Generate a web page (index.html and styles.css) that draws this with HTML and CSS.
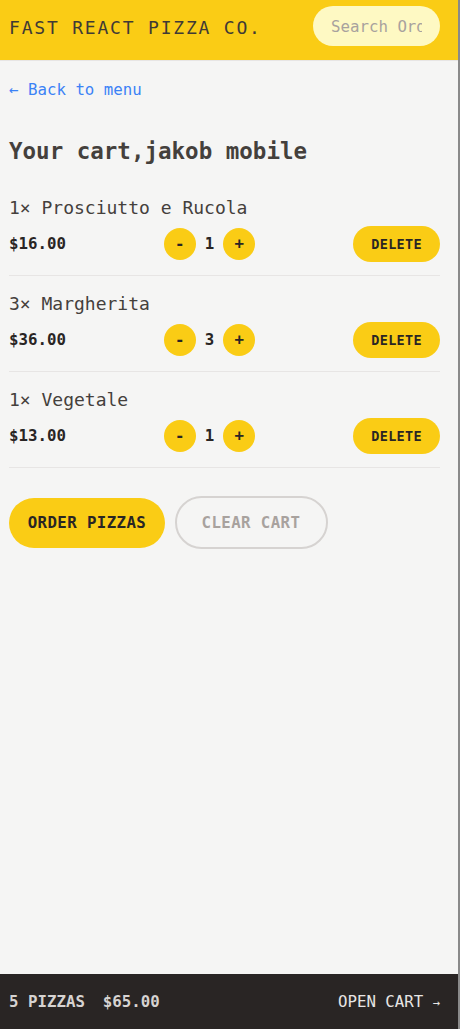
FILE: index.html
```html
<!DOCTYPE html>
<html lang="en">
<head>
<meta charset="utf-8">
<title>Fast React Pizza Co.</title>
<link rel="stylesheet" href="styles.css">
</head>
<body>
<div class="app">
  <header class="header">
    <a class="logo" href="#">Fast React Pizza Co.</a>
    <input class="search" type="text" placeholder="Search Order #">
  </header>
  <main class="main">
    <a class="back" href="#">&larr; Back to menu</a>
    <h2 class="title">Your cart,jakob mobile</h2>
    <ul class="cart-list">
      <li class="item">
        <p class="item-name">1&times; Prosciutto e Rucola</p>
        <div class="item-row">
          <p class="price">$16.00</p>
          <div class="qty">
            <button class="round">-</button>
            <span class="qty-num">1</span>
            <button class="round">+</button>
          </div>
          <button class="delete">Delete</button>
        </div>
      </li>
      <li class="item">
        <p class="item-name">3&times; Margherita</p>
        <div class="item-row">
          <p class="price">$36.00</p>
          <div class="qty">
            <button class="round">-</button>
            <span class="qty-num">3</span>
            <button class="round">+</button>
          </div>
          <button class="delete">Delete</button>
        </div>
      </li>
      <li class="item">
        <p class="item-name">1&times; Vegetale</p>
        <div class="item-row">
          <p class="price">$13.00</p>
          <div class="qty">
            <button class="round">-</button>
            <span class="qty-num">1</span>
            <button class="round">+</button>
          </div>
          <button class="delete">Delete</button>
        </div>
      </li>
    </ul>
    <div class="actions">
      <a class="btn-primary" href="#">Order pizzas</a>
      <button class="btn-secondary">Clear cart</button>
    </div>
  </main>
  <footer class="footer">
    <p class="summary"><span>5 pizzas</span><span>$65.00</span></p>
    <a class="open-cart" href="#">Open cart <span class="arrow">&rarr;</span></a>
  </footer>
</div>
</body>
</html>
```

FILE: styles.css
```css
* { box-sizing: border-box; margin: 0; padding: 0; }

html, body {
  height: 100%;
}

body {
  background: #f5f5f4;
  color: #44403c;
  font-family: "DejaVu Sans Mono", "Liberation Mono", monospace;
  font-size: 15.75px;
}

.app {
  display: grid;
  grid-template-rows: auto 1fr auto;
  min-height: 100vh;
  width: 460px;
  border-right: 2px solid #8a8a8a;
}

a { text-decoration: none; color: inherit; }
button { font-family: inherit; border: none; cursor: pointer; }

.header {
  display: flex;
  align-items: center;
  justify-content: space-between;
  background: #facc15;
  padding: 6px 18px 14px 9px;
  border-bottom: 1px solid #e7e5e4;
}

.logo {
  font-size: 18px;
  letter-spacing: 0.1em;
  text-transform: uppercase;
  color: #3f3a35;
  padding-top: 2px;
}

.search {
  width: 127px;
  height: 40px;
  border: none;
  border-radius: 999px;
  background: #fef9c3;
  padding: 0 18px;
  font-family: inherit;
  font-size: 15.75px;
  color: #44403c;
  outline: none;
}
.search::placeholder { color: #a8a29e; }

.main {
  padding: 18px 18px 0 9px;
}

.back {
  display: block;
  color: #3b82f6;
  font-size: 15.75px;
  line-height: 22.5px;
}

.title {
  margin-top: 34px;
  font-size: 22.5px;
  line-height: 31.5px;
  font-weight: 700;
  color: #44403c;
}

.cart-list {
  list-style: none;
  margin-top: 13px;
}

.item {
  padding: 14px 0 13.5px;
  border-bottom: 1px solid #e7e5e4;
}

.item-name {
  font-size: 18px;
  line-height: 27px;
  margin-bottom: 4.5px;
  color: #44403c;
  padding-top: 1px;
  margin-top: -1px;
}

.item-row {
  display: flex;
  align-items: center;
  justify-content: space-between;
  height: 36px;
}

.price {
  font-size: 15.75px;
  font-weight: 700;
  color: #292524;
}

.qty {
  display: flex;
  align-items: center;
  gap: 9px;
}

.qty-num {
  font-size: 15.75px;
  font-weight: 700;
  color: #292524;
}

.round {
  width: 32px;
  height: 32px;
  border-radius: 50%;
  background: #facc15;
  color: #292524;
  font-size: 15.75px;
  font-weight: 700;
  display: flex;
  align-items: center;
  justify-content: center;
}

.delete {
  height: 36px;
  padding: 0 18px;
  border-radius: 999px;
  background: #facc15;
  color: #292524;
  font-size: 13.5px;
  font-weight: 700;
  letter-spacing: 0.025em;
  text-transform: uppercase;
}

.actions {
  margin-top: 28px;
  display: flex;
  align-items: center;
  gap: 9.5px;
}

.btn-primary {
  display: inline-flex;
  align-items: center;
  justify-content: center;
  width: 156px;
  height: 50px;
  border-radius: 999px;
  background: #facc15;
  color: #292524;
  font-size: 15.75px;
  font-weight: 700;
  letter-spacing: 0.025em;
  text-transform: uppercase;
}

.btn-secondary {
  width: 153px;
  height: 53px;
  border-radius: 999px;
  background: transparent;
  border: 2px solid #d6d3d1;
  color: #a8a29e;
  font-size: 15.75px;
  font-weight: 700;
  letter-spacing: 0.025em;
  text-transform: uppercase;
}

.footer {
  display: flex;
  align-items: center;
  justify-content: space-between;
  height: 55px;
  padding: 0 18px 0 9px;
  background: #292524;
  color: #e7e5e4;
  font-size: 15.75px;
  text-transform: uppercase;
}

.summary {
  display: flex;
  gap: 18px;
  font-weight: 700;
  color: #d6d3d1;
}

.open-cart {
  color: #e7e5e4;
}

.arrow {
  font-size: 12px;
}
```
